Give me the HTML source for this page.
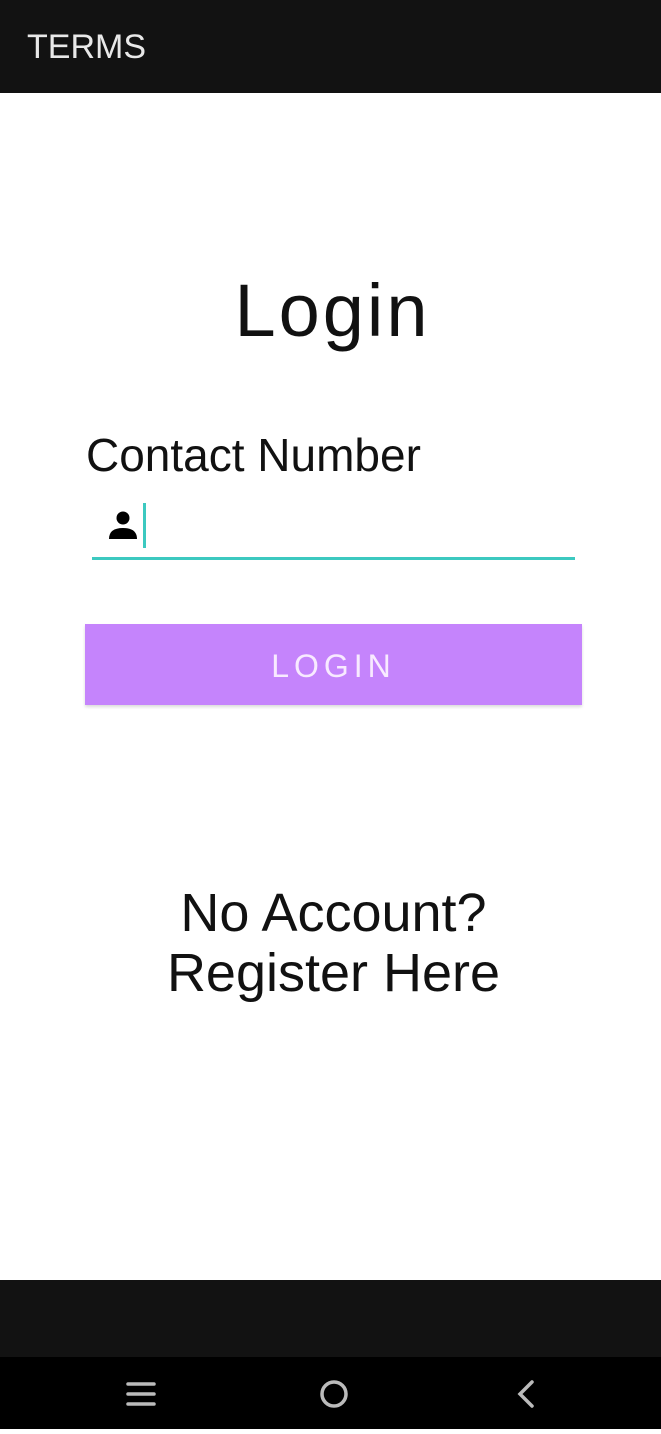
<!DOCTYPE html>
<html><head><meta charset="utf-8"><style>
body{margin:0;width:661px;height:1429px;position:relative;background:#fff;font-family:"Liberation Sans",sans-serif;overflow:hidden}
.top{position:absolute;left:0;top:0;width:661px;height:93px;background:#121212}
.top span{position:absolute;left:27px;top:27px;font-size:34px;color:#e8e8e8;line-height:40px}
.t{position:absolute;left:0;width:661px;text-align:center;color:#111}
.bar{position:absolute;left:0;top:1280px;width:661px;height:77px;background:#121212}
.nav{position:absolute;left:0;top:1357px;width:661px;height:72px;background:#000}
</style></head><body>
<div class="top"><span>TERMS</span></div>
<div class="t" style="top:268px;font-size:74px;line-height:86px;letter-spacing:3px;left:2px">Login</div>
<div style="position:absolute;left:86px;top:428px;font-size:46px;line-height:54px;color:#111">Contact Number</div>
<svg style="position:absolute;left:108px;top:509px" width="30" height="32" viewBox="0 0 30 32"><circle cx="15" cy="9" r="6.5" fill="#000"/><path d="M1 30 Q1 19 15 19 Q29 19 29 30 Z" fill="#000"/></svg>
<div style="position:absolute;left:143px;top:503px;width:3px;height:45px;background:#3cc9c0"></div>
<div style="position:absolute;left:92px;top:557px;width:483px;height:3px;background:#3cc9c0"></div>
<div style="position:absolute;left:85px;top:624px;width:497px;height:81px;background:#c584fc;box-shadow:0 2px 3px rgba(0,0,0,.15);text-align:center;line-height:84px;font-size:32px;letter-spacing:5px;color:#f8eaff">LOGIN</div>
<div class="t" style="top:883px;font-size:54px;line-height:60px;left:3px">No Account?<br>Register Here</div>
<div class="bar"></div>
<div class="nav">
<svg width="661" height="72"><g stroke="#bbb" stroke-width="3.5" stroke-linecap="round" fill="none"><path d="M128 1384H154M128 1394H154M128 1404H154" transform="translate(0,-1357)"/><circle cx="334" cy="37" r="12"/><path d="M532 25L520 37L532 49"/></g></svg>
</div>
</body></html>
